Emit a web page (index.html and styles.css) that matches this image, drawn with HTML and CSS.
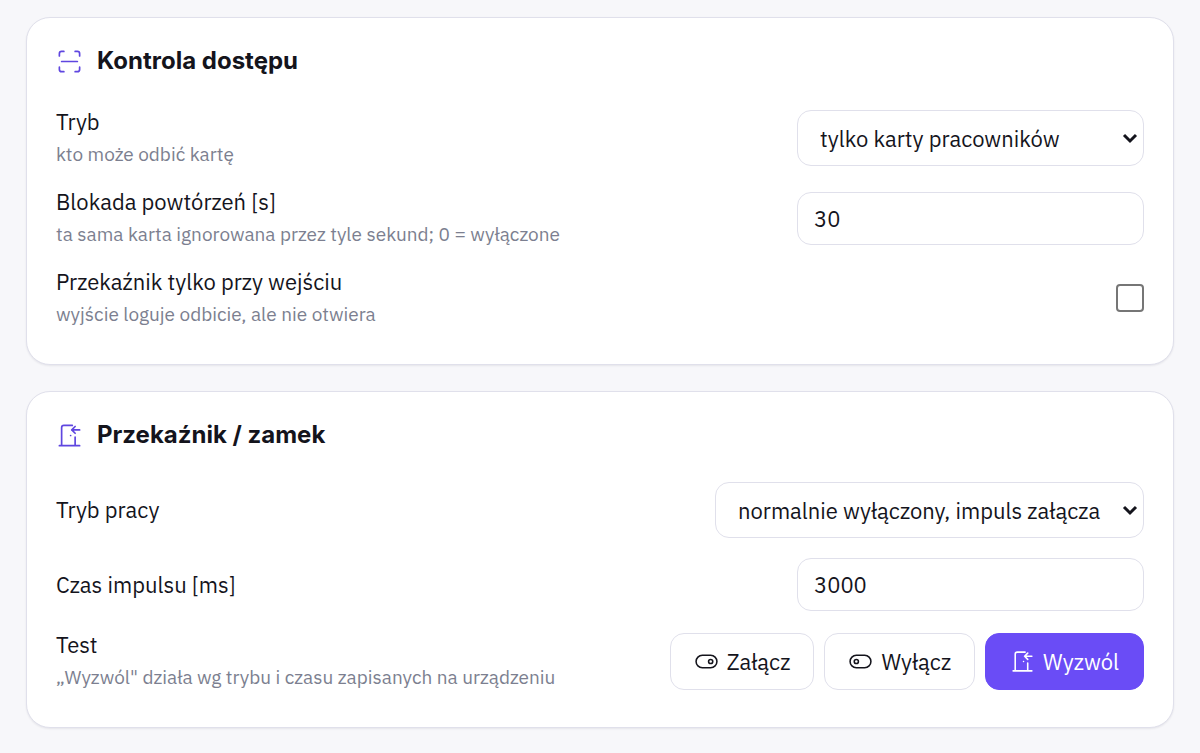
FILE: index.html
```html
<!DOCTYPE html>
<html lang="pl">
<head>
    <meta charset="UTF-8">
    <meta name="viewport" content="width=device-width, initial-scale=1.0">
    <title>Kontrola dostępu</title>
    <link rel="stylesheet" href="styles.css">
</head>
<body>
    <section class="card">
        <h2>
            <svg class="icon" viewBox="0 0 24 24"><path d="M3 7V5a2 2 0 0 1 2-2h2M3 17v2a2 2 0 0 0 2 2h2M17 3h2a2 2 0 0 1 2 2v2M17 21h2a2 2 0 0 0 2-2v-2M5 12h14"/></svg>
            Kontrola dostępu
        </h2>
        <div class="row">
            <label for="mode">Tryb<small>kto może odbić kartę</small></label>
            <select id="mode">
                <option>tylko karty pracowników</option>
            </select>
        </div>
        <div class="row">
            <label for="lockout">Blokada powtórzeń [s]<small>ta sama karta ignorowana przez tyle sekund; 0 = wyłączone</small></label>
            <input type="text" inputmode="numeric" id="lockout" value="30">
        </div>
        <div class="row">
            <label for="entryOnly">Przekaźnik tylko przy wejściu<small>wyjście loguje odbicie, ale nie otwiera</small></label>
            <input type="checkbox" id="entryOnly">
        </div>
    </section>

    <section class="card">
        <h2>
            <svg class="icon" viewBox="0 0 24 24"><path d="M13 12v.01M3 21h18M5 21V5a2 2 0 0 1 2-2h7.5M17 13.5V21M21 7h-7m3-3-3 3 3 3"/></svg>
            Przekaźnik / zamek
        </h2>
        <div class="row">
            <label for="relayMode">Tryb pracy</label>
            <select id="relayMode">
                <option>normalnie wyłączony, impuls załącza</option>
            </select>
        </div>
        <div class="row">
            <label for="pulse">Czas impulsu [ms]</label>
            <input type="text" inputmode="numeric" id="pulse" value="3000">
        </div>
        <div class="row">
            <div class="label">Test<small>„Wyzwól" działa wg trybu i czasu zapisanych na urządzeniu</small></div>
            <div class="buttons">
                <button type="button">
                    <svg class="icon" viewBox="0 0 24 24"><rect x="2" y="6" width="20" height="12" rx="6"/><circle cx="16" cy="12" r="2"/></svg>
                    Załącz
                </button>
                <button type="button">
                    <svg class="icon" viewBox="0 0 24 24"><rect x="2" y="6" width="20" height="12" rx="6"/><circle cx="8" cy="12" r="2"/></svg>
                    Wyłącz
                </button>
                <button type="button" class="primary">
                    <svg class="icon" viewBox="0 0 24 24"><path d="M13 12v.01M3 21h18M5 21V5a2 2 0 0 1 2-2h7.5M17 13.5V21M21 7h-7m3-3-3 3 3 3"/></svg>
                    Wyzwól
                </button>
            </div>
        </div>
    </section>
</body>
</html>
```
FILE: styles.css
```css
* {
    margin: 0;
    padding: 0;
    box-sizing: border-box;
}

body {
    font-family: "IBM Plex Sans", "Noto Sans", sans-serif;
    font-size: 22px;
    background: #f7f7fa;
    color: #14141c;
    padding: 17px 26px;
}

.card {
    background: #fff;
    border: 1px solid #e0e0eb;
    border-radius: 24px;
    box-shadow: 0 1px 2px rgba(20, 20, 50, 0.08);
    padding: 26px 29px;
    margin-bottom: 26px;
}

h2 {
    display: flex;
    align-items: center;
    gap: 14px;
    font-family: Inter, sans-serif;
    font-size: 24px;
    font-weight: 700;
    line-height: 34px;
    margin-bottom: 20px;
}

.icon {
    width: 25px;
    height: 25px;
    flex: none;
    fill: none;
    stroke: currentColor;
    stroke-width: 1.5;
    stroke-linecap: round;
    stroke-linejoin: round;
}

h2 .icon {
    width: 27px;
    height: 27px;
    color: #5f46e0;
}

.row {
    display: flex;
    align-items: center;
    justify-content: space-between;
    gap: 20px;
    padding: 10px 0;
}

label,
.label {
    line-height: 28px;
}

small {
    display: block;
    margin-top: 4px;
    font-size: 19px;
    line-height: 28px;
    color: #7c7f90;
}

select,
input[type="text"] {
    width: 347px;
    height: 53px;
    font: inherit;
    color: inherit;
    background: #fff;
    border: 1px solid #e0e0eb;
    border-radius: 14px;
    padding: 0 16px;
}

select {
    appearance: none;
    width: auto;
    min-width: 347px;
    height: 56px;
    padding: 0 42px 0 22px;
    background: #fff url("data:image/svg+xml,%3Csvg xmlns='http://www.w3.org/2000/svg' width='16' height='12' fill='none' stroke='%2314141c' stroke-width='3'%3E%3Cpath d='M2 3l6 6 6-6'/%3E%3C/svg%3E") no-repeat right 5px center;
}

input[type="checkbox"] {
    appearance: none;
    width: 28px;
    height: 28px;
    border: 2px solid #767676;
    border-radius: 4px;
}

input[type="checkbox"]:checked {
    background: #6a4cf6;
    border-color: #6a4cf6;
}

.buttons {
    display: flex;
    gap: 10px;
}

button {
    display: flex;
    align-items: center;
    gap: 8px;
    height: 57px;
    padding: 0 23px;
    font: inherit;
    color: inherit;
    background: #fff;
    border: 1px solid #e0e0eb;
    border-radius: 14px;
    cursor: pointer;
}

.primary {
    padding: 0 24px;
    color: #fff;
    background: #6a4cf6;
    border-color: #6a4cf6;
}
```
